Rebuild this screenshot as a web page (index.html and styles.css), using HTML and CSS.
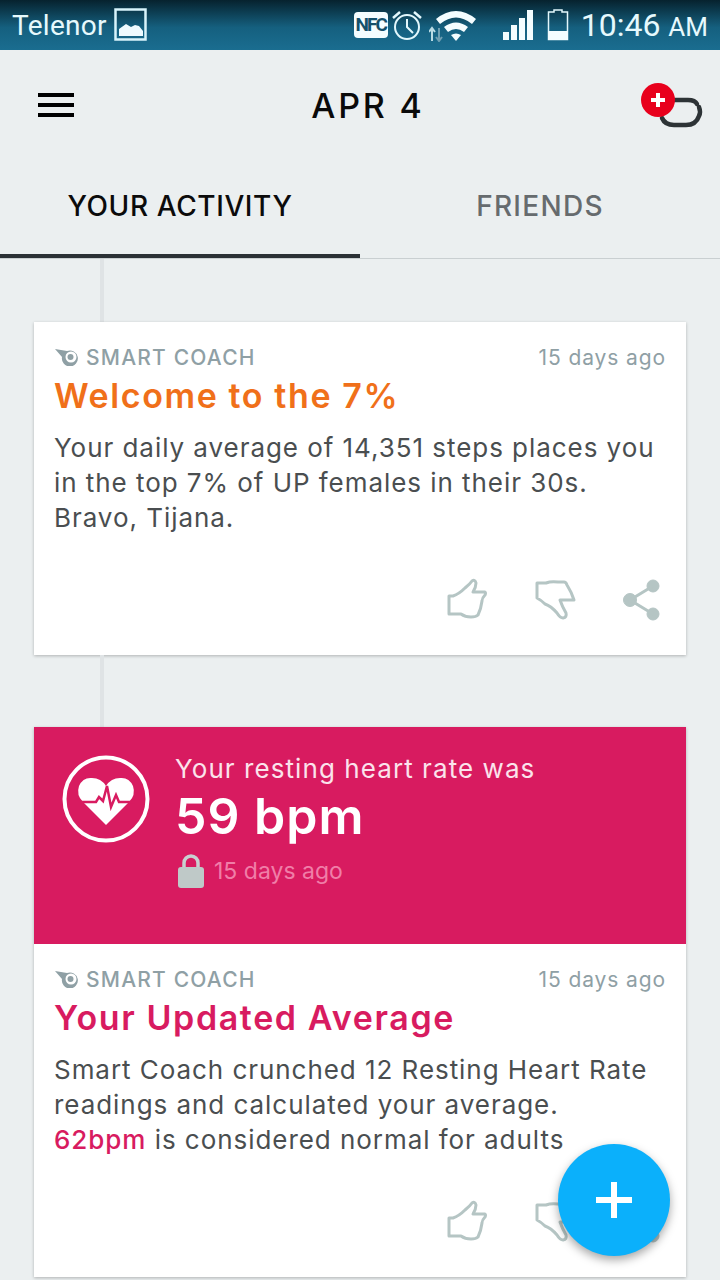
FILE: index.html
```html
<!DOCTYPE html>
<html lang="en">
<head>
  <meta charset="UTF-8" />
  <meta name="viewport" content="width=device-width, initial-scale=1.0" />
  <title>UP Activity</title>
  <link rel="stylesheet" href="styles.css">
</head>
<body>
  <div class="screen">
    <div class="statusbar">
      <span class="carrier">Telenor</span>
      <svg class="pic-icon" width="34" height="34" viewBox="0 0 34 34">
        <rect x="1.500" y="1.500" width="30" height="30" fill="none" stroke="#d8f4fb" stroke-width="2.500"/>
        <path d="M5 28V21l7-5 5 3 4-2 4 1 4 5v5z" fill="#eefbff"/>
      </svg>
      <span class="status-right">
        <span class="nfc">NFC</span>
        <svg class="alarm" width="32" height="32" viewBox="0 0 32 32" fill="none" stroke="#e2f7fc">
          <circle cx="16" cy="18" r="12" stroke-width="2"/>
          <path d="M16 10v8l6 6" stroke-width="2"/>
          <path d="M2 9l7-6M30 9l-7-6" stroke-width="2.500"/>
        </svg>
        <svg class="wifi" width="48" height="34" viewBox="0 0 48 34">
          <path d="M3 21v12M0 24l3-4 3 4" fill="none" stroke="#b9dbe4" stroke-width="2"/>
          <path d="M10 32V20M7 29l3 4 3-4" fill="none" stroke="#6f9fb2" stroke-width="2"/>
          <path d="M7 11Q27-5 47 11l-4 5Q27 3 11 16z" fill="#f4fdff"/>
          <path d="M15 19q12-9 24 0l-4 5q-8-6-16 0z" fill="#f4fdff"/>
          <path d="M22 27q5-3 10 0l-5 6z" fill="#f4fdff"/>
        </svg>
        <svg class="signal" width="32" height="32" viewBox="0 0 32 32" fill="#f4fdff">
          <rect x="1" y="23" width="6" height="8"/><rect x="9" y="16" width="6" height="15"/>
          <rect x="17" y="9" width="6" height="22"/><rect x="25" y="1" width="6" height="30"/>
        </svg>
        <svg class="battery" width="22" height="32" viewBox="0 0 22 32">
          <path d="M7 3V1h8v2h5.500v27.500H1.500V3z" fill="none" stroke="#e2f7fc" stroke-width="1.500"/>
          <rect x="1" y="22" width="20" height="9" fill="#f4fdff"/>
        </svg>
        <span class="clock">10:46 <small>AM</small></span>
      </span>
    </div>

    <div class="appbar">
      <div class="burger"><i></i><i></i><i></i></div>
      <div class="date">APR 4</div>
      <svg class="band" width="64" height="50" viewBox="0 0 64 50">
        <path d="M30 17h18q7 0 9 4M59 24q2 5 0 9-3 9-13 9H34q-9 0-12-7" fill="none" stroke="#2d3336" stroke-width="4.500" stroke-linecap="round"/>
        <circle cx="18" cy="17" r="17" fill="#e8001c"/>
        <path d="M18 10v14M11 17h14" stroke="#fff" stroke-width="4"/>
      </svg>
    </div>

    <div class="tabs">
      <div class="tab active">YOUR ACTIVITY</div>
      <div class="tab friends">FRIENDS</div>
    </div>

    <div class="feed">
      <div class="connector first"></div>
      <div class="card">
        <div class="card-body">
          <div class="meta">
            <span class="coach">
              <svg width="26" height="18" viewBox="0 0 26 18"><path d="M1 1l12 2a8 8 0 1 1-5 6z" fill="#8fa0a5"/><path d="M17 3.500a5.500 5.500 0 1 1 0 11 5.500 5.500 0 0 1 0-11z" fill="#fff"/><circle cx="16.500" cy="9" r="3" fill="#8fa0a5"/></svg>
              SMART COACH
            </span>
            <span class="ago">15 days ago</span>
          </div>
          <h2 class="title orange">Welcome to the 7%</h2>
          <p class="copy">Your daily average of 14,351 steps places you<br>in the top 7% of UP females in their 30s.<br>Bravo, Tijana.</p>
        </div>
        <div class="actions">
          <svg width="44" height="44" viewBox="0 0 44 44" fill="none" stroke="#b5c5c4" stroke-width="3" stroke-linejoin="round"><path d="M3 18h4q6-2 12-8 5-4 7-7 3-2 4 2 0 4-3 9h12q1 1 0 3-3 3-3 6-1 8-4 14-2 2-7 2-6 0-10-3H3z"/></svg>
          <svg width="44" height="44" viewBox="0 0 44 44" fill="none" stroke="#b5c5c4" stroke-width="3" stroke-linejoin="round"><path d="M3 5h9q5-2 12-1h6q2 0 3 3 5 8 7 15H26q2 6 6 13 1 4-3 5-3 0-6-5-6-7-12-9-4-4-8-6z"/></svg>
          <svg width="40" height="44" viewBox="0 0 40 44" fill="#b5c5c4" stroke="#b5c5c4"><circle cx="31" cy="8" r="6"/><circle cx="8" cy="22" r="6.500"/><circle cx="31" cy="36" r="6"/><path d="M31 8L8 22l23 14" fill="none" stroke-width="3"/></svg>
        </div>
      </div>

      <div class="connector"></div>
      <div class="card">
        <div class="heart-banner">
          <svg class="heart-icon" width="88" height="88" viewBox="0 0 88 88">
            <circle cx="44" cy="44" r="41.500" fill="none" stroke="#fff" stroke-width="4"/>
            <path d="M44 70L21 47Q14 40 17 31q4-9 13-8 9 0 14 8 5-8 14-8 9-1 13 8 3 9-4 16z" fill="#fff"/>
            <path d="M18 47h16l3-5 4 4 4-15 4 21 5-12 3 7h16" fill="none" stroke="#d81b60" stroke-width="2.500"/>
          </svg>
          <div class="heart-text">
            <div class="heart-label">Your resting heart rate was</div>
            <div class="heart-value">59 bpm</div>
            <div class="heart-ago">
              <svg width="26" height="34" viewBox="0 0 26 34"><path d="M6 15V9a7 7 0 0 1 14 0v6" fill="none" stroke="#c8d0d0" stroke-width="3.500"/><rect x="0" y="13" width="26" height="21" rx="3" fill="#bfc9c8"/></svg>
              15 days ago
            </div>
          </div>
        </div>
        <div class="card-body">
          <div class="meta">
            <span class="coach">
              <svg width="26" height="18" viewBox="0 0 26 18"><path d="M1 1l12 2a8 8 0 1 1-5 6z" fill="#8fa0a5"/><path d="M17 3.500a5.500 5.500 0 1 1 0 11 5.500 5.500 0 0 1 0-11z" fill="#fff"/><circle cx="16.500" cy="9" r="3" fill="#8fa0a5"/></svg>
              SMART COACH
            </span>
            <span class="ago">15 days ago</span>
          </div>
          <h2 class="title pink">Your Updated Average</h2>
          <p class="copy">Smart Coach crunched 12 Resting Heart Rate<br>readings and calculated your average.<br><b>62bpm</b> is considered normal for adults</p>
        </div>
        <div class="actions">
          <svg width="44" height="44" viewBox="0 0 44 44" fill="none" stroke="#b5c5c4" stroke-width="3" stroke-linejoin="round"><path d="M3 18h4q6-2 12-8 5-4 7-7 3-2 4 2 0 4-3 9h12q1 1 0 3-3 3-3 6-1 8-4 14-2 2-7 2-6 0-10-3H3z"/></svg>
          <svg width="44" height="44" viewBox="0 0 44 44" fill="none" stroke="#b5c5c4" stroke-width="3" stroke-linejoin="round"><path d="M3 5h9q5-2 12-1h6q2 0 3 3 5 8 7 15H26q2 6 6 13 1 4-3 5-3 0-6-5-6-7-12-9-4-4-8-6z"/></svg>
          <svg width="40" height="44" viewBox="0 0 40 44" fill="#b5c5c4" stroke="#b5c5c4"><circle cx="31" cy="8" r="6"/><circle cx="8" cy="22" r="6.500"/><circle cx="31" cy="36" r="6"/><path d="M31 8L8 22l23 14" fill="none" stroke-width="3"/></svg>
        </div>
      </div>
    </div>

    <div class="fab">
      <svg width="36" height="36" viewBox="0 0 36 36"><path d="M18 0v36M0 18h36" stroke="#fff" stroke-width="6"/></svg>
    </div>
  </div>
</body>
</html>
```

FILE: styles.css
```css
html, body {
  margin: 0;
  padding: 0;
}
body {
  font-family: "Inter", "Open Sans", sans-serif;
  background: #ebeff0;
}
.screen {
  position: relative;
  width: 720px;
  height: 1280px;
  overflow: hidden;
  background: #ebeff0;
}

/* status bar */
.statusbar {
  height: 50px;
  display: flex;
  align-items: center;
  padding: 0 12px;
  box-sizing: border-box;
  background: linear-gradient(#06222e, #15607f 55%, #1a6d90);
  color: #e6f9fd;
  font-family: "Roboto", sans-serif;
}
.carrier {
  font-size: 28px;
  letter-spacing: 0.3px;
  margin-right: 7px;
}
.status-right {
  margin-left: auto;
  display: flex;
  align-items: center;
}
.nfc {
  width: 34px;
  height: 26px;
  background: #f4fdff;
  color: #14506b;
  border-radius: 4px;
  font-size: 19px;
  font-weight: 700;
  line-height: 26px;
  text-align: center;
  letter-spacing: -2px;
  margin-right: 3px;
}
.wifi {
  margin-left: 6px;
  margin-right: 25px;
}
.signal {
  margin-right: 13px;
}
.battery {
  margin-right: 12px;
}
.clock {
  font-size: 32px;
  white-space: nowrap;
}
.clock small {
  font-size: 26px;
}

/* header */
.appbar {
  height: 110px;
  position: relative;
  display: flex;
  align-items: center;
  justify-content: space-between;
  padding: 0 16px 0 38px;
}
.burger {
  width: 36px;
}
.burger i {
  display: block;
  height: 4px;
  background: #000;
  margin: 6px 0;
}
.date {
  position: absolute;
  left: 16px;
  right: 0;
  text-align: center;
  font-size: 34px;
  font-weight: 500;
  letter-spacing: 2.8px;
  color: #0a0a0a;
}
.band {
  margin-top: 6px;
}

/* tabs */
.tabs {
  display: flex;
  height: 99px;
  box-sizing: border-box;
  border-bottom: 1px solid #c9cfd1;
}
.tab {
  width: 360px;
  box-sizing: border-box;
  text-align: center;
  font-size: 28px;
  font-weight: 500;
  letter-spacing: 0.6px;
  line-height: 92px;
  color: #666b6e;
}
.tab.friends {
  letter-spacing: 1.3px;
}
.tab.active {
  color: #0b0b0b;
  border-bottom: 4px solid #2b3135;
  height: 98px;
}

/* feed */
.feed {
  padding: 0 34px;
}
.connector {
  width: 4px;
  height: 72px;
  margin-left: 66px;
  background: #dfe3e5;
}
.connector.first {
  height: 63px;
}
.card {
  background: #fff;
  box-shadow: 0 1px 3px rgba(0, 0, 0, 0.25);
}
.card-body {
  padding: 20px 20px 0;
}
.meta {
  display: flex;
  justify-content: space-between;
  align-items: center;
  height: 30px;
}
.coach {
  display: flex;
  align-items: center;
  gap: 6px;
  font-size: 21px;
  font-weight: 500;
  letter-spacing: 1.2px;
  color: #8fa0a5;
}
.ago {
  font-size: 21px;
  letter-spacing: 0.9px;
  color: #8fa0a5;
}
.title {
  margin: 2px 0 0;
  font-size: 34px;
  line-height: 44px;
  font-weight: 600;
  letter-spacing: 1.6px;
}
.orange {
  color: #f0701a;
}
.pink {
  color: #d81b60;
}
.copy {
  margin: 12px 0 0;
  font-size: 26px;
  line-height: 35px;
  letter-spacing: 0.95px;
  color: #4a4e50;
}
.copy b {
  font-weight: 500;
  color: #d81b60;
}
.actions {
  display: flex;
  justify-content: flex-end;
  gap: 44px;
  padding: 43px 24px 33px 0;
}

/* heart rate banner */
.heart-banner {
  height: 217px;
  box-sizing: border-box;
  background: #d81b60;
  display: flex;
  padding: 27px 0 0 28px;
  color: #fff;
}
.heart-icon {
  margin-top: 1px;
}
.heart-text {
  margin-left: 25px;
}
.heart-label {
  font-size: 26px;
  line-height: 30px;
  letter-spacing: 1.07px;
  color: #fbe3ec;
}
.heart-value {
  font-size: 50px;
  font-weight: 600;
  line-height: 64px;
  letter-spacing: 1px;
}
.heart-ago {
  display: flex;
  align-items: center;
  gap: 10px;
  margin-top: 6px;
  margin-left: 3px;
  font-size: 23px;
  color: #f07ea8;
}

/* floating button */
.fab {
  position: absolute;
  left: 558px;
  top: 1144px;
  width: 112px;
  height: 112px;
  border-radius: 50%;
  background: #0bb0fb;
  box-shadow: 0 4px 10px rgba(0, 0, 0, 0.35);
  display: flex;
  align-items: center;
  justify-content: center;
}
```
